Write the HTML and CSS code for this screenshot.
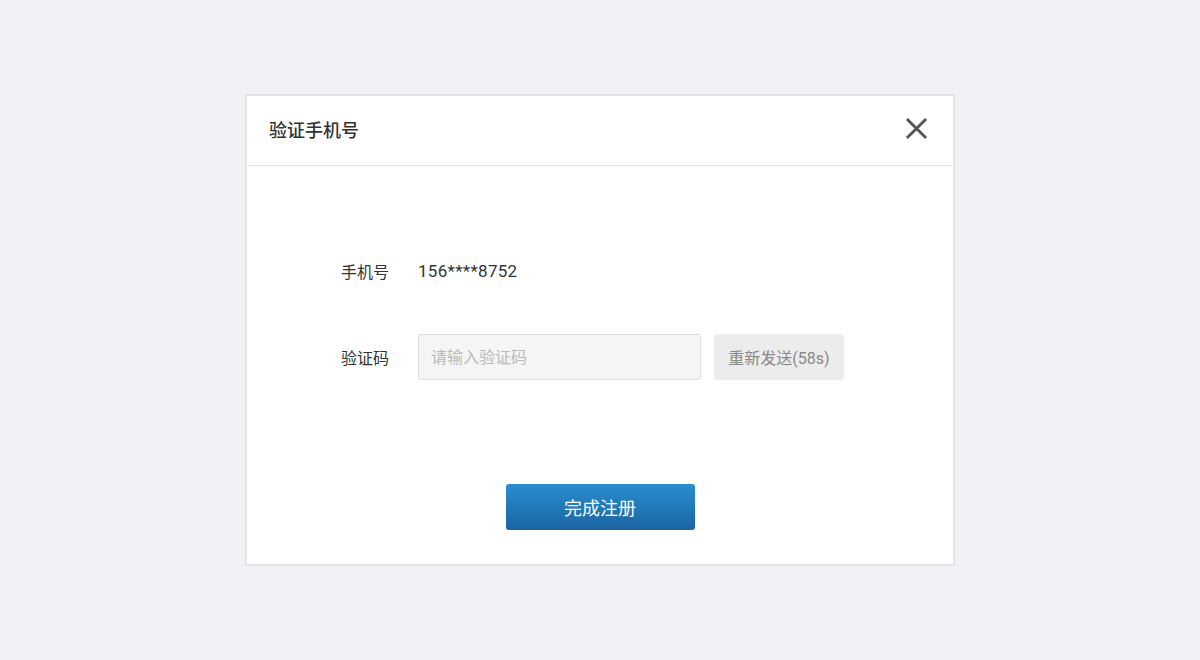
FILE: index.html
```html
<!DOCTYPE html>
<html lang="zh-CN">
<head>
    <meta charset="UTF-8">
    <meta name="viewport" content="width=device-width, initial-scale=1.0">
    <title>验证手机号</title>
    <link rel="stylesheet" href="styles.css">
</head>
<body>
    <div class="dialog">
        <div class="dialog-header">
            <h2 class="dialog-title">验证手机号</h2>
            <span class="dialog-close">
                <svg viewBox="0 0 24 24">
                    <path d="M2 2L22 22M22 2L2 22"/>
                </svg>
            </span>
        </div>
        <div class="dialog-body">
            <div class="form-row">
                <span class="form-label">手机号</span>
                <span class="form-value">156****8752</span>
            </div>
            <div class="form-row">
                <span class="form-label">验证码</span>
                <input class="code-input" type="text" placeholder="请输入验证码">
                <span class="resend-button">重新发送(58s)</span>
            </div>
            <div class="form-actions">
                <span class="submit-button">完成注册</span>
            </div>
        </div>
    </div>
</body>
</html>
```

FILE: styles.css
```css
body {
    font-family: Roboto, "Noto Sans CJK SC", sans-serif;
    background-color: #f0f1f5;
    margin: 0;
    height: 100vh;
    display: flex;
    align-items: center;
    justify-content: center;
}
.dialog {
    width: 710px;
    height: 472px;
    box-sizing: border-box;
    background: white;
    border: 2px solid #e2e3e6;
    display: flex;
    flex-direction: column;
}
.dialog-header {
    height: 70px;
    box-sizing: border-box;
    border-bottom: 1px solid #e2e3e6;
    display: flex;
    align-items: center;
    justify-content: space-between;
    padding: 0 25px 4px 22px;
}
.dialog-title {
    margin: 0;
    font-size: 18px;
    font-weight: 500;
    color: #333;
}
.dialog-close {
    width: 23px;
    height: 23px;
    display: flex;
}
.dialog-close svg {
    width: 23px;
    height: 23px;
    stroke: #555;
    stroke-width: 3;
    fill: none;
}
.dialog-body {
    padding: 82px 0 0 94px;
    display: flex;
    flex-direction: column;
    gap: 40px;
}
.form-row {
    display: flex;
    align-items: center;
    height: 46px;
    font-size: 16px;
    color: #333;
}
.form-label {
    width: 48px;
    margin-right: 29px;
    text-align: right;
}
.form-value {
    font-size: 17px;
    letter-spacing: 0.3px;
}
.code-input {
    width: 283px;
    height: 46px;
    box-sizing: border-box;
    border: 1px solid #dedede;
    border-radius: 3px;
    background: #f5f5f5;
    padding: 0 12px;
    font-family: inherit;
    font-size: 16px;
    color: #333;
    outline: none;
}
.code-input::placeholder {
    color: #b9b9b9;
}
.resend-button {
    margin-left: 13px;
    width: 130px;
    height: 46px;
    border-radius: 3px;
    background: #ececec;
    color: #888;
    display: flex;
    align-items: center;
    justify-content: center;
}
.form-actions {
    margin: 64px 0 0 -94px;
    display: flex;
    justify-content: center;
}
.submit-button {
    width: 189px;
    height: 46px;
    border-radius: 3px;
    background: linear-gradient(to bottom, #2a8dd0, #1b65a1);
    color: white;
    font-size: 18px;
    display: flex;
    align-items: center;
    justify-content: center;
}
```
